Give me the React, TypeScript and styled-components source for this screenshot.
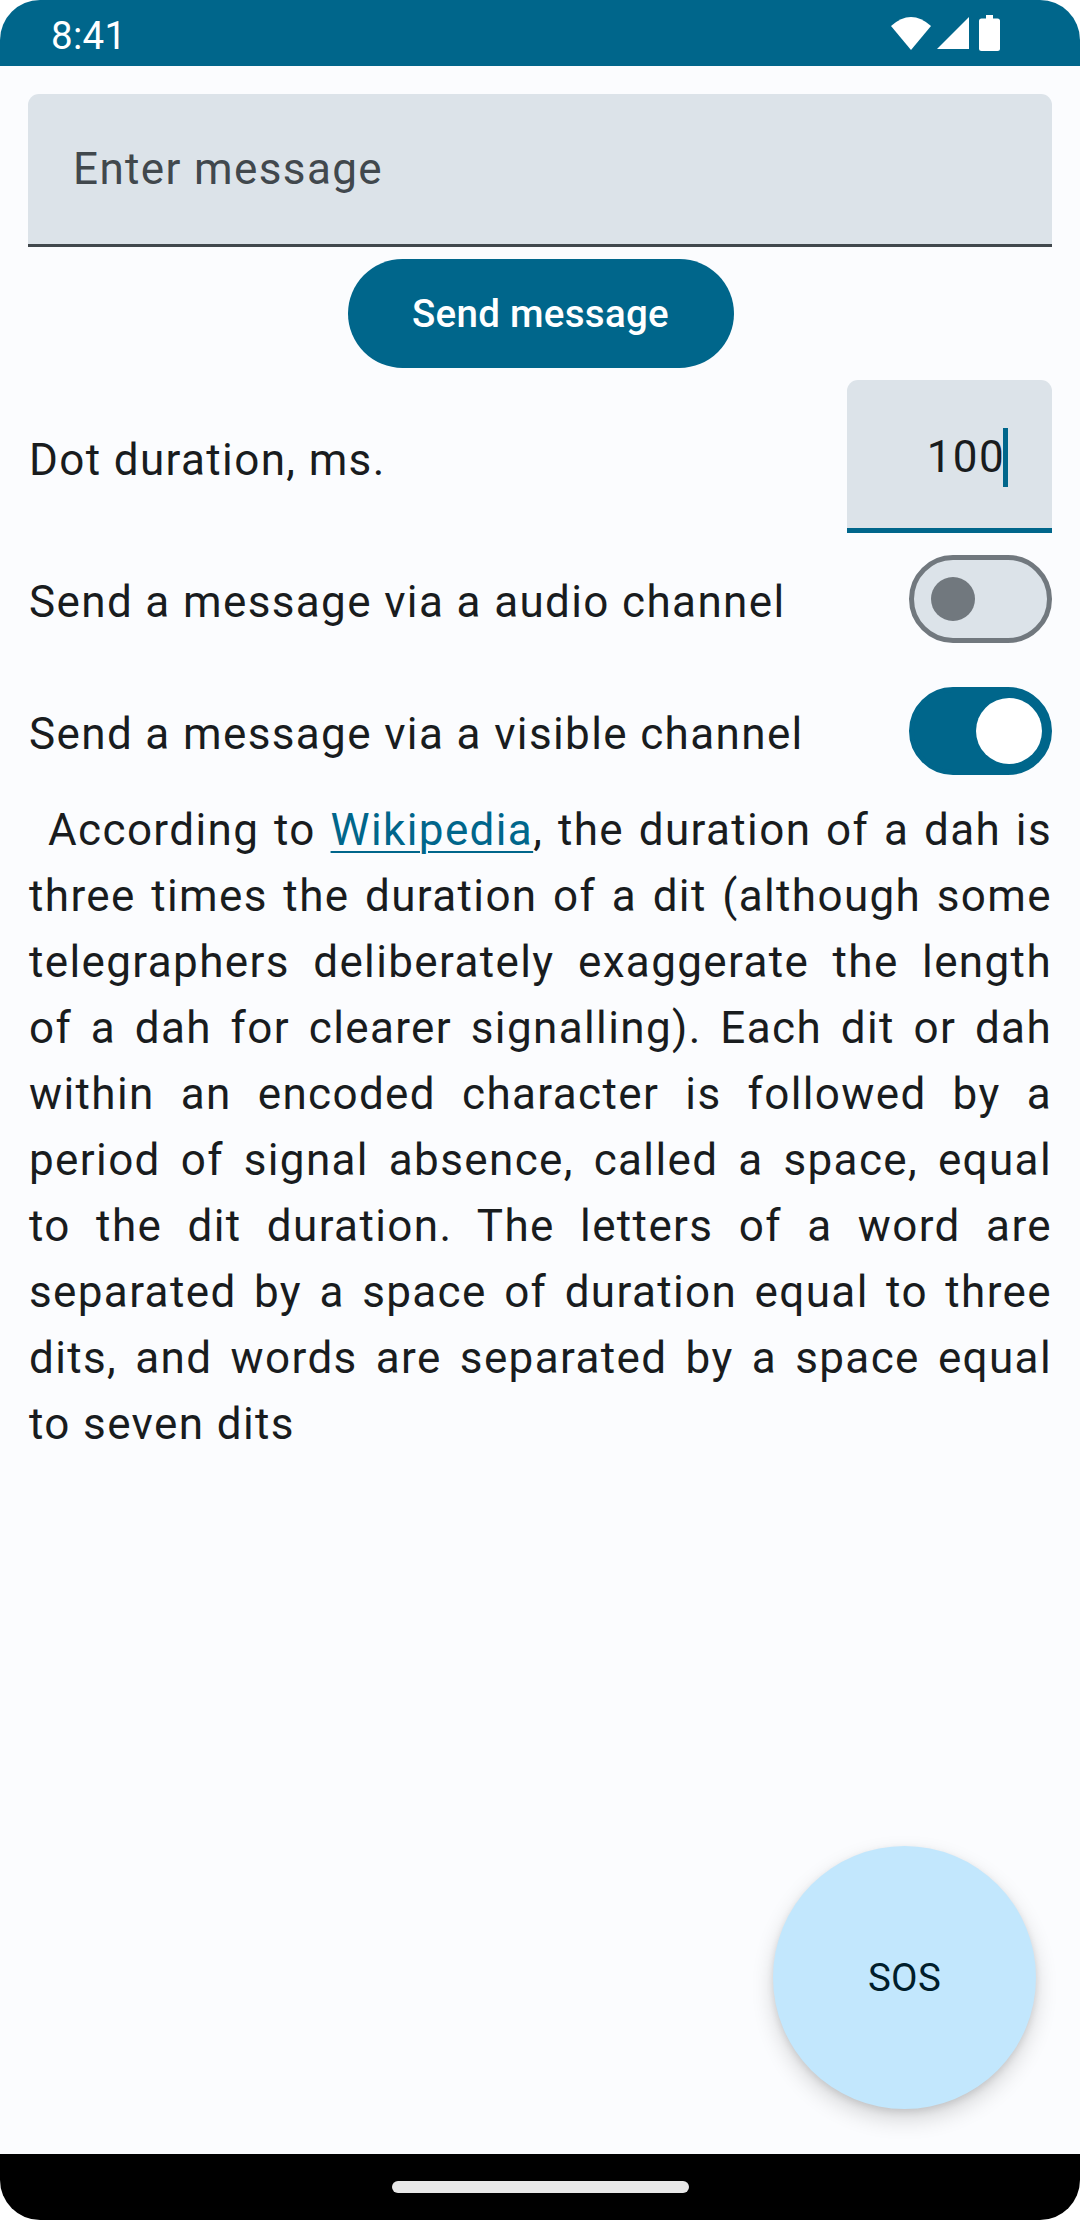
import React from "react";
import styled, { createGlobalStyle } from "styled-components";

const PRIMARY = "#00668B";
const SURFACE = "#FBFCFE";
const SURFACE_VARIANT = "#DCE3E9";
const ON_SURFACE = "#191C1E";
const ON_SURFACE_VARIANT = "#41484D";
const OUTLINE = "#71787E";

const GlobalStyle = createGlobalStyle`
  html, body {
    margin: 0;
    padding: 0;
    background: #ffffff;
  }
  * {
    box-sizing: border-box;
  }
  body {
    font-family: Roboto, "Liberation Sans", sans-serif;
  }
`;

const Phone = styled.div`
  width: 1080px;
  height: 2220px;
  display: flex;
  flex-direction: column;
  background: #ffffff;
`;

const StatusBar = styled.div`
  height: 66px;
  flex: none;
  background: ${PRIMARY};
  border-radius: 40px 40px 0 0;
  display: flex;
  align-items: center;
  justify-content: space-between;
  padding: 0 77px 0 51px;
`;

const Clock = styled.span`
  color: #ffffff;
  font-size: 38.5px;
  padding-top: 4px;
  letter-spacing: 0.3px;
`;

const StatusIcons = styled.div`
  display: flex;
  align-items: center;
  gap: 5px;
`;

const Content = styled.main`
  flex: 1;
  position: relative;
  background: ${SURFACE};
  padding: 28px 28px 0 29px;
  display: flex;
  flex-direction: column;
`;

const MessageField = styled.div`
  height: 153px;
  margin-left: -1px;
  background: ${SURFACE_VARIANT};
  border-radius: 11px 11px 0 0;
  border-bottom: 3px solid ${ON_SURFACE_VARIANT};
  display: flex;
  align-items: center;
  padding: 0 44px 0 45px;
`;

const Placeholder = styled.span`
  font-size: 44px;
  letter-spacing: 1.375px;
  color: ${ON_SURFACE_VARIANT};
`;

const SendButton = styled.button`
  align-self: center;
  margin-top: 12px;
  width: 386px;
  height: 109px;
  border: none;
  border-radius: 55px;
  background: ${PRIMARY};
  color: #ffffff;
  font-family: Roboto, "Liberation Sans", sans-serif;
  font-weight: 500;
  font-size: 38.5px;
  letter-spacing: 0.275px;
  padding: 0;
`;

const Row = styled.div<{ $height: number; $top?: number }>`
  display: flex;
  align-items: center;
  justify-content: space-between;
  height: ${(p) => p.$height}px;
  margin-top: ${(p) => p.$top ?? 0}px;
`;

const Label = styled.span`
  font-size: 44px;
  letter-spacing: 1.375px;
  color: ${ON_SURFACE};
  padding-top: 6px;
`;

const NumberField = styled.div`
  width: 205px;
  height: 153px;
  background: ${SURFACE_VARIANT};
  border-radius: 11px 11px 0 0;
  border-bottom: 5.5px solid ${PRIMARY};
  display: flex;
  align-items: center;
  justify-content: flex-end;
  padding: 6px 44px 0 0;
  font-size: 44px;
  letter-spacing: 1.375px;
  color: ${ON_SURFACE};
`;

const Caret = styled.span`
  display: inline-block;
  width: 5px;
  height: 59px;
  margin-left: -2px;
  vertical-align: -11px;
  background: ${PRIMARY};
`;

const Track = styled.div<{ $on: boolean }>`
  width: 143px;
  height: 88px;
  border-radius: 44px;
  border: 5.5px solid ${(p) => (p.$on ? PRIMARY : OUTLINE)};
  background: ${(p) => (p.$on ? PRIMARY : SURFACE_VARIANT)};
  display: flex;
  align-items: center;
  justify-content: ${(p) => (p.$on ? "flex-end" : "flex-start")};
  padding: ${(p) => (p.$on ? "0 5.5px" : "0 16.5px")};
`;

const Thumb = styled.div<{ $on: boolean }>`
  width: ${(p) => (p.$on ? 66 : 44)}px;
  height: ${(p) => (p.$on ? 66 : 44)}px;
  border-radius: 50%;
  background: ${(p) => (p.$on ? "#ffffff" : OUTLINE)};
`;

const Paragraph = styled.p`
  margin: 0;
  font-size: 44px;
  line-height: 66px;
  letter-spacing: 1.375px;
  color: ${ON_SURFACE};
  text-align: justify;
  text-indent: 19px;
`;

const Link = styled.a`
  color: ${PRIMARY};
  text-decoration: underline;
  text-underline-offset: 6px;
  text-decoration-thickness: 2px;
`;

const Fab = styled.button`
  position: absolute;
  right: 44px;
  bottom: 45px;
  width: 263px;
  height: 263px;
  border-radius: 50%;
  border: none;
  background: #c2e7fd;
  color: #001e2c;
  font-family: Roboto, "Liberation Sans", sans-serif;
  font-size: 38.5px;
  letter-spacing: 0.3px;
  padding: 0;
  box-shadow: 0 10px 22px rgba(0, 0, 0, 0.16), 0 3px 7px rgba(0, 0, 0, 0.1);
`;

const NavBar = styled.div`
  height: 66px;
  flex: none;
  background: #000000;
  border-radius: 0 0 40px 40px;
  display: flex;
  align-items: center;
  justify-content: center;
`;

const Handle = styled.div`
  width: 297px;
  height: 12px;
  border-radius: 6px;
  background: #e8e8e8;
`;

const Switch = ({ on }: { on: boolean }) => (
  <Track $on={on} role="switch" aria-checked={on}>
    <Thumb $on={on} />
  </Track>
);

export default function App() {
  return (
    <>
      <GlobalStyle />
      <Phone>
        <StatusBar>
          <Clock>8:41</Clock>
          <StatusIcons>
            <svg width="40" height="33" viewBox="0 0 40 33">
              <path d="M0 9 Q20 -9 40 9 L20 33 Z" fill="#fff" />
            </svg>
            <svg width="34" height="33" viewBox="0 0 34 33">
              <path d="M1 32 L33 32 L33 0 Z" fill="#fff" />
            </svg>
            <svg width="28" height="36" viewBox="0 0 28 36">
              <rect x="11" y="0" width="7" height="5" fill="#fff" />
              <rect x="4" y="3.5" width="21" height="32.5" rx="2.5" fill="#fff" />
            </svg>
          </StatusIcons>
        </StatusBar>
        <Content>
          <MessageField>
            <Placeholder>Enter message</Placeholder>
          </MessageField>
          <SendButton>Send message</SendButton>
          <Row $height={153} $top={12}>
            <Label>Dot duration, ms.</Label>
            <NumberField>
              <span>100</span>
              <Caret />
            </NumberField>
          </Row>
          <Row $height={132}>
            <Label>Send a message via a audio channel</Label>
            <Switch on={false} />
          </Row>
          <Row $height={132}>
            <Label>Send a message via a visible channel</Label>
            <Switch on={true} />
          </Row>
          <Paragraph>
            According to <Link>Wikipedia</Link>, the duration of a dah is three
            times the duration of a dit (although some telegraphers deliberately
            exaggerate the length of a dah for clearer signalling). Each dit or
            dah within an encoded character is followed by a period of signal
            absence, called a space, equal to the dit duration. The letters of a
            word are separated by a space of duration equal to three dits, and
            words are separated by a space equal to seven dits
          </Paragraph>
          <Fab>SOS</Fab>
        </Content>
        <NavBar>
          <Handle />
        </NavBar>
      </Phone>
    </>
  );
}
